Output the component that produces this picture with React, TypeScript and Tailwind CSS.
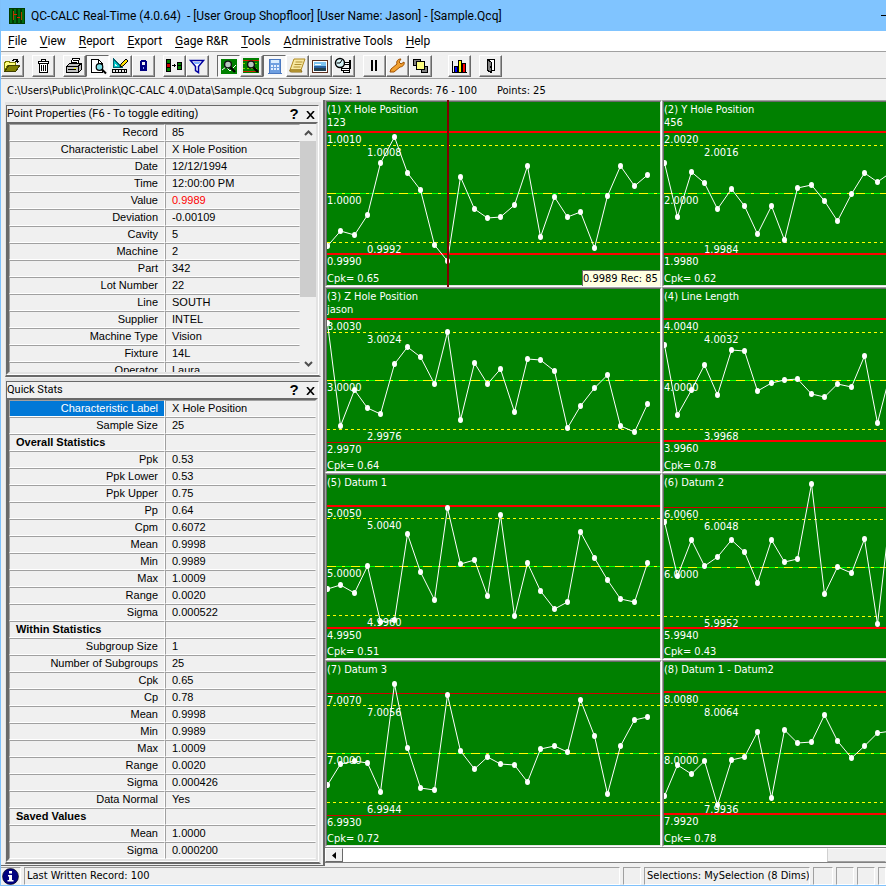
import { ReactNode } from "react";

type Level = { y: number; label: string; thin?: boolean };

type Chart = {
  title: string;
  note?: string;
  cpk: string;
  upper: Level;
  upperControl: Level;
  nominal: Level;
  lowerControl: Level;
  lower: Level;
  points: number[];
};

type Row = { label: string; value?: string; group?: boolean; alert?: boolean; selected?: boolean };

const STEP = 40 / 3;

const charts: Chart[] = [
  {
    title: "(1) X Hole Position",
    note: "123",
    cpk: "0.65",
    upper: { y: 30, label: "1.0010" },
    upperControl: { y: 43, label: "1.0008" },
    nominal: { y: 91, label: "1.0000" },
    lowerControl: { y: 140, label: "0.9992" },
    lower: { y: 152, label: "0.9990" },
    points: [144, 129, 133, 113, 61, 35, 71, 88, 143, 159, 75, 107, 116, 115, 103, 64, 135, 95, 115, 110, 146, 94, 64, 84, 73],
  },
  {
    title: "(2) Y Hole Position",
    note: "456",
    cpk: "0.62",
    upper: { y: 30, label: "2.0020" },
    upperControl: { y: 43, label: "2.0016" },
    nominal: { y: 91, label: "2.0000" },
    lowerControl: { y: 140, label: "1.9984" },
    lower: { y: 152, label: "1.9980" },
    points: [61, 115, 70, 81, 107, 87, 104, 132, 104, 138, 86, 83, 99, 119, 92, 71, 80, 70],
  },
  {
    title: "(3) Z Hole Position",
    note: "jason",
    cpk: "0.64",
    upper: { y: 30, label: "3.0030" },
    upperControl: { y: 43, label: "3.0024" },
    nominal: { y: 91, label: "3.0000" },
    lowerControl: { y: 140, label: "2.9976" },
    lower: { y: 153, label: "2.9970", thin: true },
    points: [34, 137, 101, 119, 125, 75, 58, 68, 95, 43, 131, 74, 95, 80, 123, 70, 71, 82, 139, 117, 99, 86, 137, 143, 115],
  },
  {
    title: "(4) Line Length",
    cpk: "0.78",
    upper: { y: 30, label: "4.0040" },
    upperControl: { y: 43, label: "4.0032" },
    nominal: { y: 91, label: "4.0000" },
    lowerControl: { y: 140, label: "3.9968" },
    lower: { y: 152, label: "3.9960" },
    points: [56, 126, 101, 76, 106, 61, 62, 102, 94, 91, 90, 105, 108, 95, 98, 67, 134, 80],
  },
  {
    title: "(5) Datum 1",
    cpk: "0.51",
    upper: { y: 31, label: "5.0050" },
    upperControl: { y: 43, label: "5.0040" },
    nominal: { y: 91, label: "5.0000" },
    lowerControl: { y: 140, label: "4.9960" },
    lower: { y: 153, label: "4.9950" },
    points: [114, 110, 118, 91, 147, 145, 59, 97, 125, 33, 89, 85, 121, 40, 141, 88, 116, 134, 127, 57, 83, 105, 124, 127, 88],
  },
  {
    title: "(6) Datum 2",
    cpk: "0.43",
    upper: { y: 32, label: "6.0060", thin: true },
    upperControl: { y: 44, label: "6.0048" },
    nominal: { y: 92, label: "6.0000" },
    lowerControl: { y: 141, label: "5.9952" },
    lower: { y: 153, label: "5.9940" },
    points: [47, 101, 65, 91, 82, 65, 77, 108, 65, 87, 84, 9, 119, 92, 98, 64, 149, 28],
  },
  {
    title: "(7) Datum 3",
    cpk: "0.72",
    upper: { y: 31, label: "7.0070", thin: true },
    upperControl: { y: 43, label: "7.0056" },
    nominal: { y: 91, label: "7.0000" },
    lowerControl: { y: 140, label: "6.9944" },
    lower: { y: 153, label: "6.9930", thin: true },
    points: [123, 102, 99, 101, 130, 22, 86, 126, 128, 33, 89, 107, 95, 102, 103, 120, 87, 84, 90, 38, 74, 132, 84, 58, 55],
  },
  {
    title: "(8) Datum 1 - Datum2",
    cpk: "0.78",
    upper: { y: 30, label: "8.0080" },
    upperControl: { y: 43, label: "8.0064" },
    nominal: { y: 91, label: "8.0000" },
    lowerControl: { y: 140, label: "7.9936" },
    lower: { y: 152, label: "7.9920" },
    points: [134, 103, 112, 99, 143, 98, 95, 70, 136, 68, 81, 80, 53, 79, 96, 84, 71, 69],
  },
];

const pointRows: Row[] = [
  { label: "Record", value: "85" },
  { label: "Characteristic Label", value: "X Hole Position" },
  { label: "Date", value: "12/12/1994" },
  { label: "Time", value: "12:00:00 PM" },
  { label: "Value", value: "0.9989", alert: true },
  { label: "Deviation", value: "-0.00109" },
  { label: "Cavity", value: "5" },
  { label: "Machine", value: "2" },
  { label: "Part", value: "342" },
  { label: "Lot Number", value: "22" },
  { label: "Line", value: "SOUTH" },
  { label: "Supplier", value: "INTEL" },
  { label: "Machine Type", value: "Vision" },
  { label: "Fixture", value: "14L" },
  { label: "Operator", value: "Laura" },
];

const statRows: Row[] = [
  { label: "Characteristic Label", value: "X Hole Position", selected: true },
  { label: "Sample Size", value: "25" },
  { label: "Overall Statistics", group: true },
  { label: "Ppk", value: "0.53" },
  { label: "Ppk Lower", value: "0.53" },
  { label: "Ppk Upper", value: "0.75" },
  { label: "Pp", value: "0.64" },
  { label: "Cpm", value: "0.6072" },
  { label: "Mean", value: "0.9998" },
  { label: "Min", value: "0.9989" },
  { label: "Max", value: "1.0009" },
  { label: "Range", value: "0.0020" },
  { label: "Sigma", value: "0.000522" },
  { label: "Within Statistics", group: true },
  { label: "Subgroup Size", value: "1" },
  { label: "Number of Subgroups", value: "25" },
  { label: "Cpk", value: "0.65" },
  { label: "Cp", value: "0.78" },
  { label: "Mean", value: "0.9998" },
  { label: "Min", value: "0.9989" },
  { label: "Max", value: "1.0009" },
  { label: "Range", value: "0.0020" },
  { label: "Sigma", value: "0.000426" },
  { label: "Data Normal", value: "Yes" },
  { label: "Saved Values", group: true },
  { label: "Mean", value: "1.0000" },
  { label: "Sigma", value: "0.000200" },
];

const menus = ["File", "View", "Report", "Export", "Gage R&R", "Tools", "Administrative Tools", "Help"];

function Icon({ children }: { children: ReactNode }) {
  return (
    <svg width="20" height="19" viewBox="0 0 20 19" className="block" shapeRendering="crispEdges" aria-hidden="true">
      {children}
    </svg>
  );
}

function Magnifier() {
  return (
    <g shapeRendering="auto">
      <path d="M12 11l5 5" stroke="#000" strokeWidth="2.4" />
      <circle cx="10" cy="8.5" r="3.4" fill="#b8c8c0" stroke="#111" strokeWidth="1.4" />
    </g>
  );
}

const icons = {
  open: (
    <Icon>
      <path d="M2 6h1V5h4v1h6v3H6l-4 6z" fill="#ffff80" stroke="#808000" />
      <path d="M3 15l4-6h11l-4 6z" fill="#808000" stroke="#404000" />
      <path d="M10 4h1V3h3v1h1v2M13 5h4M15 3v4" fill="none" stroke="#000" />
    </Icon>
  ),
  trash: (
    <Icon>
      <path d="M8.5 3.5h4v2h-4zM5.5 5.5h10v2h-10z" fill="#fff" stroke="#000" />
      <path d="M6.5 7.5h8v9h-8z" fill="#fff" stroke="#000" />
      <path d="M8.5 9v6M10.5 9v6M12.5 9v6" stroke="#000" />
    </Icon>
  ),
  print: (
    <Icon>
      <path d="M6.5 8.5l2-6h7l-2 6z" fill="#fff" stroke="#000" />
      <path d="M9 4.5h5M8 6.5h5" stroke="#000" />
      <path d="M2.5 10.5l3-3h12v6l-3 3h-12z" fill="#c0c0c0" stroke="#000" />
      <path d="M3 10.5h11l3-3M14.5 10v6" fill="none" stroke="#000" />
      <path d="M4 13.5h8" stroke="#000" />
      <path d="M10 12h2v1h-2z" fill="#ff0" />
    </Icon>
  ),
  preview: (
    <Icon>
      <path d="M4.5 3.5h7l4 4v9h-11z" fill="#fff" stroke="#000" />
      <path d="M11.5 3.5v4h4" fill="none" stroke="#000" />
      <g shapeRendering="auto">
        <circle cx="12.5" cy="11" r="3.3" fill="#7fe0e8" stroke="#000" strokeWidth="1.2" />
        <path d="M15 13.5l4 4" stroke="#000" strokeWidth="2" />
      </g>
    </Icon>
  ),
  design: (
    <Icon>
      <path d="M3 2.5l9 9H3z" fill="#00c8c8" stroke="#006070" />
      <path d="M5 7.5l2 2H5z" fill="#f0f0f0" />
      <path d="M2.5 13.5h14v3h-14z" fill="#e8e8e8" stroke="#000" />
      <path d="M5.5 14v2M8.5 14v2M11.5 14v2M14.5 14v2" stroke="#000" />
      <path d="M10 11l1-3 5-5 2 2-5 5z" fill="#ffe000" stroke="#000" shapeRendering="auto" />
    </Icon>
  ),
  lock: (
    <Icon>
      <path d="M8 9V6l1-1h3l1 1v3" fill="none" stroke="#000080" strokeWidth="2" />
      <path d="M7 9h7v6H7z" fill="#000080" />
      <path d="M10 11h1v2h-1z" fill="#8fa0ff" />
    </Icon>
  ),
  transfer: (
    <Icon>
      <path d="M2 3h5v13H2zM13 6h5v8h-5z" fill="#000" />
      <path d="M3 4h3v3H3zM14 7h3v2h-3zM3 12h3v3H3z" fill="#008000" />
      <path d="M3 8h3v3H3z" fill="#d00000" />
      <path d="M14 10h3v3h-3z" fill="#008000" />
      <path d="M8 9h4v1H8zM10 8h1v3h-1z" fill="#000" />
    </Icon>
  ),
  filter: (
    <Icon>
      <g shapeRendering="auto">
        <path d="M3.5 4.5h13l-5 6v6l-3-2v-4z" fill="#fff" stroke="#0000a0" strokeWidth="1.5" />
        <path d="M6 6h8l-2 2H8z" fill="#80b0ff" />
      </g>
    </Icon>
  ),
  zoomChart: (
    <Icon>
      <path d="M3 3h16v15H3z" fill="#008000" />
      <path d="M4 14l4-3 4 4 6-6" fill="none" stroke="#fff" shapeRendering="auto" />
      <Magnifier />
    </Icon>
  ),
  zoomLimits: (
    <Icon>
      <rect x="2" y="2" width="16" height="15" fill="#008000" />
      <rect x="2" y="4" width="16" height="1" fill="#d02000" />
      <rect x="2" y="15" width="16" height="1" fill="#d02000" />
      <path d="M2 7.5h16M2 12.5h16" stroke="#80d000" strokeDasharray="2 2" />
      <Magnifier />
    </Icon>
  ),
  calculator: (
    <Icon>
      <path d="M6 3h10l1 14H5z" fill="#6f9fe0" stroke="#4a78c0" />
      <path d="M7 4h8v3H7z" fill="#d8ecff" />
      <path d="M7 9h2v2H7zM10 9h2v2h-2zM13 9h2v2h-2zM7 12h2v2H7zM10 12h2v2h-2zM13 12h2v2h-2z" fill="#e4f0ff" />
    </Icon>
  ),
  notes: (
    <Icon>
      <g shapeRendering="auto">
        <path d="M7 3h11l-4 11H3z" fill="#f8e8a0" stroke="#b08a20" />
        <path d="M3 14h11l1 2H5c-2 0-3-1-2-2z" fill="#d8b850" stroke="#8a6a10" />
        <path d="M8.5 6h7M7.5 8.5h7M6.5 11h7" stroke="#b09030" />
      </g>
    </Icon>
  ),
  picture: (
    <Icon>
      <path d="M2.5 4.5h15v12h-15z" fill="#fff" stroke="#5a3020" />
      <path d="M4 6h12v4H4z" fill="#7fc4f0" />
      <path d="M4 10h12v2H4z" fill="#2860a0" />
      <path d="M4 12h12v3H4z" fill="#204050" />
      <path d="M5 8h6v1H5z" fill="#fff" />
    </Icon>
  ),
  gage: (
    <Icon>
      <g shapeRendering="auto">
        <circle cx="7" cy="7" r="4.5" fill="#d8f4f8" stroke="#000" strokeWidth="1.5" />
        <path d="M7 7l2-3M7 7H4" stroke="#000" />
      </g>
      <path d="M11.5 6.5h5v2h-5zM8.5 12.5h8v2h-8zM10.5 14.5h6v2h-6z" fill="#fff" stroke="#000" />
      <path d="M16 4h2v9h-2z" fill="#000" />
    </Icon>
  ),
  pause: (
    <Icon>
      <path d="M7 4h2v11H7zM11 4h2v11h-2z" fill="#000" />
    </Icon>
  ),
  wrench: (
    <Icon>
      <path
        d="M3 16l1-3 6-5c-1-3 1-5 4-5l-2 3 2 2 3-2c1 3-2 5-4 5l-6 5z"
        fill="#f0a030"
        stroke="#a05000"
        shapeRendering="auto"
      />
    </Icon>
  ),
  cascade: (
    <Icon>
      <path d="M3.5 3.5h7v6h-7zM11.5 10.5h6v6h-6z" fill="#808080" stroke="#000" />
      <path d="M6.5 5.5h8v8h-8z" fill="#ffff80" stroke="#000" />
    </Icon>
  ),
  bars: (
    <Icon>
      <path d="M3.5 5v11.5H18" fill="none" stroke="#000" />
      <path d="M5 10h4v6H5zM9 4h4v12H9zM13 7h4v9h-4z" fill="#000" />
      <path d="M6 11h2v5H6z" fill="#00f" />
      <path d="M10 5h2v11h-2z" fill="#ff0" />
      <path d="M14 8h2v8h-2z" fill="#f00" />
    </Icon>
  ),
  exit: (
    <Icon>
      <path d="M7.5 3.5h7v11h-7z" fill="#fff" stroke="#000" />
      <path d="M7.5 3.5l4 3v10l-4-2z" fill="#808080" stroke="#000" />
      <path d="M10 10h1v2h-1z" fill="#000" />
    </Icon>
  ),
};

type ToolItem = { name: string; icon: ReactNode; pressed?: boolean };

const toolGroups: ToolItem[][] = [
  [{ name: "Open", icon: icons.open }],
  [{ name: "Delete", icon: icons.trash }],
  [
    { name: "Print", icon: icons.print },
    { name: "Print preview", icon: icons.preview, pressed: true },
    { name: "Design report", icon: icons.design },
    { name: "Lock", icon: icons.lock },
  ],
  [
    { name: "Transfer", icon: icons.transfer },
    { name: "Filter", icon: icons.filter },
  ],
  [
    { name: "Zoom chart", icon: icons.zoomChart, pressed: true },
    { name: "Zoom limits", icon: icons.zoomLimits },
    { name: "Calculator", icon: icons.calculator, pressed: true },
    { name: "Notes", icon: icons.notes },
    { name: "Picture", icon: icons.picture },
    { name: "Gage", icon: icons.gage },
  ],
  [
    { name: "Pause", icon: icons.pause },
    { name: "Settings", icon: icons.wrench },
    { name: "Cascade", icon: icons.cascade },
  ],
  [],
  [{ name: "Charts", icon: icons.bars }],
  [{ name: "Exit", icon: icons.exit }],
];

function ToolButton({ name, icon, pressed }: ToolItem) {
  const edge = pressed
    ? "border-t-[#696969] border-l-[#696969] border-r-white border-b-white bg-[#f8f8f8]"
    : "border-t-white border-l-white border-r-[#696969] border-b-[#696969] bg-[#f0f0f0] shadow-[inset_-1px_-1px_0_#a0a0a0]";
  return (
    <button type="button" aria-label={name} aria-pressed={!!pressed} className={`flex h-[22px] w-[23px] overflow-hidden border ${edge}`}>
      {icon}
    </button>
  );
}

function PropertyTable({ rows, caption }: { rows: Row[]; caption: string }) {
  return (
    <table aria-label={caption} className="w-full table-fixed border-separate border-spacing-0 text-[11px] leading-[15px]">
      <colgroup>
        <col className="w-[156px]" />
        <col />
      </colgroup>
      <tbody>
        {rows.map((row, i) => (
          <tr key={i}>
            <th
              scope="row"
              className={`h-[17px] border border-t-[#a0a0a0] border-l-[#a0a0a0] border-r-white border-b-white p-0 ${
                row.group ? "pl-1.5 text-left font-bold" : "pr-1.5 text-right font-normal"
              } ${row.selected ? "bg-[#0078d7] text-white" : ""}`}
            >
              {row.label}
            </th>
            <td
              className={`h-[17px] border border-t-[#a0a0a0] border-l-[#a0a0a0] border-r-transparent border-b-white p-0 pl-1.5 ${
                row.alert ? "text-[#ff0000]" : ""
              }`}
            >
              {row.value}
            </td>
          </tr>
        ))}
      </tbody>
    </table>
  );
}

function Panel({ title, children }: { title: string; children: ReactNode }) {
  return (
    <section className="border-t-3 border-r-2 border-b-2 border-l border-t-[#e3e3e3] border-r-[#e3e3e3] border-b-[#696969] border-l-[#e3e3e3]">
      <div className="border border-t-[#696969] border-l-[#696969] border-r-white border-b-white">
        <header className="flex h-4 bg-[#f0f0f0]">
          <h2 className="flex-1 font-['Roboto','Liberation_Sans',sans-serif] text-[11px] leading-4 whitespace-nowrap">{title}</h2>
          <button type="button" aria-label="Help" className="w-4 text-[15px] leading-4 font-bold">
            ?
          </button>
          <button type="button" aria-label="Close" className="flex w-4 justify-center pt-[5px]">
            <svg width="9" height="8" viewBox="0 0 9 8" aria-hidden="true">
              <path d="M1 0l7 8M8 0L1 8" stroke="#000" strokeWidth="1.6" />
            </svg>
          </button>
        </header>
        <div className="border-2 border-t-[#696969] border-r-[#e3e3e3] border-b-[#e3e3e3] border-l-[#696969]">{children}</div>
      </div>
    </section>
  );
}

function LevelLabel({ x, y, text }: { x: number; y: number; text: string }) {
  return (
    <text x={x} y={y} fill="#fff">
      {text}
    </text>
  );
}

function SpecLine({ level }: { level: Level }) {
  return (
    <rect
      x="0"
      y={level.thin ? level.y : level.y - 1}
      width="100%"
      height={level.thin ? 1 : 2}
      fill={level.thin ? "#d00000" : "#ff0000"}
    />
  );
}

function RunChart({ chart }: { chart: Chart }) {
  const { upper, upperControl, nominal, lowerControl, lower, points } = chart;
  const coords = points.map((y, i) => [Math.round(i * STEP) + 0.5, y]);
  return (
    <div className="min-w-0 border border-t-[#a0a0a0] border-r-white border-b-white border-l-[#a0a0a0]">
      <div className="h-full border border-t-[#696969] border-r-[#e3e3e3] border-b-[#e3e3e3] border-l-[#696969] bg-[#008000]">
        <svg className="block h-full w-full overflow-hidden text-[11px]" role="img" aria-label={chart.title}>
          <SpecLine level={upper} />
          <SpecLine level={lower} />
          <g shapeRendering="crispEdges" strokeWidth="1">
            <line x1="0" x2="100%" y1={upperControl.y + 0.5} y2={upperControl.y + 0.5} stroke="#ff0" strokeDasharray="3 3" />
            <line x1="0" x2="100%" y1={lowerControl.y + 0.5} y2={lowerControl.y + 0.5} stroke="#ff0" strokeDasharray="3 3" />
            <line x1="0" x2="100%" y1={nominal.y + 0.5} y2={nominal.y + 0.5} stroke="#0f0" />
            <line x1="0" x2="100%" y1={nominal.y + 0.5} y2={nominal.y + 0.5} stroke="#ff0" strokeDasharray="9 6 3 6" />
          </g>
          <LevelLabel x={0} y={11} text={chart.title} />
          {chart.note && <LevelLabel x={0} y={24} text={chart.note} />}
          <LevelLabel x={0} y={upper.y + 11} text={upper.label} />
          <LevelLabel x={40} y={upperControl.y + 11} text={upperControl.label} />
          <LevelLabel x={0} y={nominal.y + 11} text={nominal.label} />
          <LevelLabel x={40} y={lowerControl.y + 11} text={lowerControl.label} />
          <LevelLabel x={0} y={lower.y + 11} text={lower.label} />
          <LevelLabel x={0} y={180} text={`Cpk= ${chart.cpk}`} />
          <polyline points={coords.map((c) => c.join(",")).join(" ")} fill="none" stroke="#fff" strokeWidth="1" />
          {coords.map(([x, y], i) => (
            <ellipse key={i} cx={x} cy={y} rx="2.5" ry="3" fill="#fff" />
          ))}
        </svg>
      </div>
    </div>
  );
}

function StatusPane({ className, children }: { className: string; children?: ReactNode }) {
  return (
    <div className={`h-[18px] overflow-hidden border border-t-[#a0a0a0] border-r-white border-b-white border-l-[#a0a0a0] pl-0.5 leading-4 whitespace-nowrap ${className}`}>
      {children}
    </div>
  );
}

export default function App() {
  return (
    <div className="flex min-h-screen flex-col overflow-hidden border-b border-l border-[#7fc1fb] bg-[#f0f0f0] font-['DejaVu_Sans_Condensed','Liberation_Sans',sans-serif] text-[11px] text-black">
      <header className="flex h-[31px] items-center bg-[#80c4ff] pl-2 font-['Roboto','Noto_Sans',sans-serif]">
        <svg width="16" height="16" viewBox="0 0 16 16" shapeRendering="crispEdges" aria-hidden="true">
          <path d="M0 0h16v16H0z" fill="#003c00" />
          <path d="M1 1h2v14H1zM5 1h2v14H5zM9 1h2v14H9zM13 1h2v14h-2z" fill="#006a10" />
          <path d="M4 3h1v9H4zM12 4h1v8h-1z" fill="#b04000" />
          <path d="M5 6h3v1H5zM8 9h3v1H8z" fill="#e02000" />
        </svg>
        <h1 className="flex-1 pl-1.5 text-[12px] whitespace-pre">
          QC-CALC Real-Time (4.0.64)  - [User Group Shopfloor] [User Name: Jason] - [Sample.Qcq]
        </h1>
        <button type="button" aria-label="Minimize" className="h-px w-[5px] bg-black" />
      </header>

      <nav className="flex h-5 items-center gap-[13px] bg-white pl-[7px] font-['Roboto','Noto_Sans',sans-serif] text-[12px]">
        {menus.map((menu) => (
          <button key={menu} type="button" className="whitespace-nowrap">
            <span className="underline underline-offset-2">{menu[0]}</span>
            {menu.slice(1)}
          </button>
        ))}
      </nav>

      <div role="toolbar" aria-label="Main" className="flex h-7 gap-2 border-y border-[#a0a0a0] pt-[3px]">
        {toolGroups.map((group, i) => (
          <div key={i} className="flex">
            {group.map((item) => (
              <ToolButton key={item.name} {...item} />
            ))}
          </div>
        ))}
      </div>

      <div className="flex h-[21px] items-center pt-1 pl-1.5 whitespace-pre">
        <span>C:\Users\Public\Prolink\QC-CALC 4.0\Data\Sample.Qcq</span>
        <span className="pl-1">Subgroup Size: 1</span>
        <span className="pl-7">Records: 76 - 100</span>
        <span className="pl-5">Points: 25</span>
      </div>

      <main className="flex flex-1">
        <aside className="flex w-[322px] shrink-0 flex-col gap-px border-b border-[#696969] bg-[#f0f0f0] pt-0.5 pr-0.5 pl-1 font-['Liberation_Sans',Arial,sans-serif]">
          <Panel title="Point Properties (F6 - To toggle editing)">
            <div className="flex h-[248px] overflow-hidden">
              <div className="flex-1">
                <PropertyTable rows={pointRows} caption="Point Properties" />
              </div>
              <div className="flex w-4 flex-col bg-[#f0f0f0]">
                <button type="button" aria-label="Scroll up" className="flex h-[17px] items-center justify-center">
                  <svg width="9" height="6" viewBox="0 0 9 6" aria-hidden="true">
                    <path d="M1 5l3.5-3.5L8 5" fill="none" stroke="#505050" strokeWidth="2" />
                  </svg>
                </button>
                <div className="h-[156px] bg-[#cdcdcd]" />
                <div className="flex-1" />
                <button type="button" aria-label="Scroll down" className="flex h-[17px] items-center justify-center">
                  <svg width="9" height="6" viewBox="0 0 9 6" aria-hidden="true">
                    <path d="M1 1l3.5 3.5L8 1" fill="none" stroke="#505050" strokeWidth="2" />
                  </svg>
                </button>
              </div>
            </div>
          </Panel>
          <Panel title="Quick Stats">
            <PropertyTable rows={statRows} caption="Quick Stats" />
          </Panel>
        </aside>

        <div className="w-0.5 shrink-0 bg-[#696969]" />

        <div className="flex min-w-0 flex-1 flex-col overflow-hidden">
          <div className="relative grid grid-cols-[repeat(2,minmax(337px,1fr))] grid-rows-[187px_186px_187px_187px]">
            {charts.map((chart) => (
              <RunChart key={chart.title} chart={chart} />
            ))}
            {/* cursor and readout of the selected record */}
            <div className="absolute top-0 left-[122px] h-[187px] w-0.5 bg-[#800000]" />
            <div className="absolute top-[170px] left-[257px] h-4 w-[78px] border-t border-l border-[#696969] bg-[#ffffe1] text-[11px] leading-[15px] whitespace-nowrap">
              0.9989 Rec: 85
            </div>
          </div>
          <div className="flex h-4 border-y border-[#808080] bg-white">
            <button
              type="button"
              aria-label="Scroll left"
              className="flex w-[18px] items-center justify-center border border-t-white border-r-[#696969] border-b-[#696969] border-l-white bg-[#f0f0f0]"
            >
              <svg width="4" height="7" viewBox="0 0 4 7" aria-hidden="true">
                <path d="M4 0v7L0 3.5z" fill="#000" />
              </svg>
            </button>
            <div className="flex-1" />
            <div className="w-[59px] border border-t-white border-r-transparent border-b-[#a0a0a0] border-l-[#d0d0d0] bg-[#f0f0f0]" />
          </div>
        </div>
      </main>

      <footer className="flex h-[19px] gap-[3px] pt-px text-[11px]">
        <div className="flex w-5 justify-center border-t border-r border-t-[#a0a0a0] border-r-white">
          <svg width="17" height="17" viewBox="0 0 17 17" aria-hidden="true">
            <circle cx="8.5" cy="8.5" r="8" fill="#000080" stroke="#000" strokeWidth=".6" />
            <path d="M7 3h3v2.5H7zM6 7h4v5h1.5v1.5h-6V12H7V8.5H6z" fill="#fff" />
          </svg>
        </div>
        <StatusPane className="flex-1">Last Written Record: 100</StatusPane>
        <StatusPane className="w-[18px]" />
        <StatusPane className="w-[166px]">Selections: MySelection (8 Dims)</StatusPane>
        <StatusPane className="w-5" />
        <StatusPane className="w-[18px]" />
        <StatusPane className="w-[18px]" />
        <StatusPane className="w-2" />
      </footer>
    </div>
  );
}
